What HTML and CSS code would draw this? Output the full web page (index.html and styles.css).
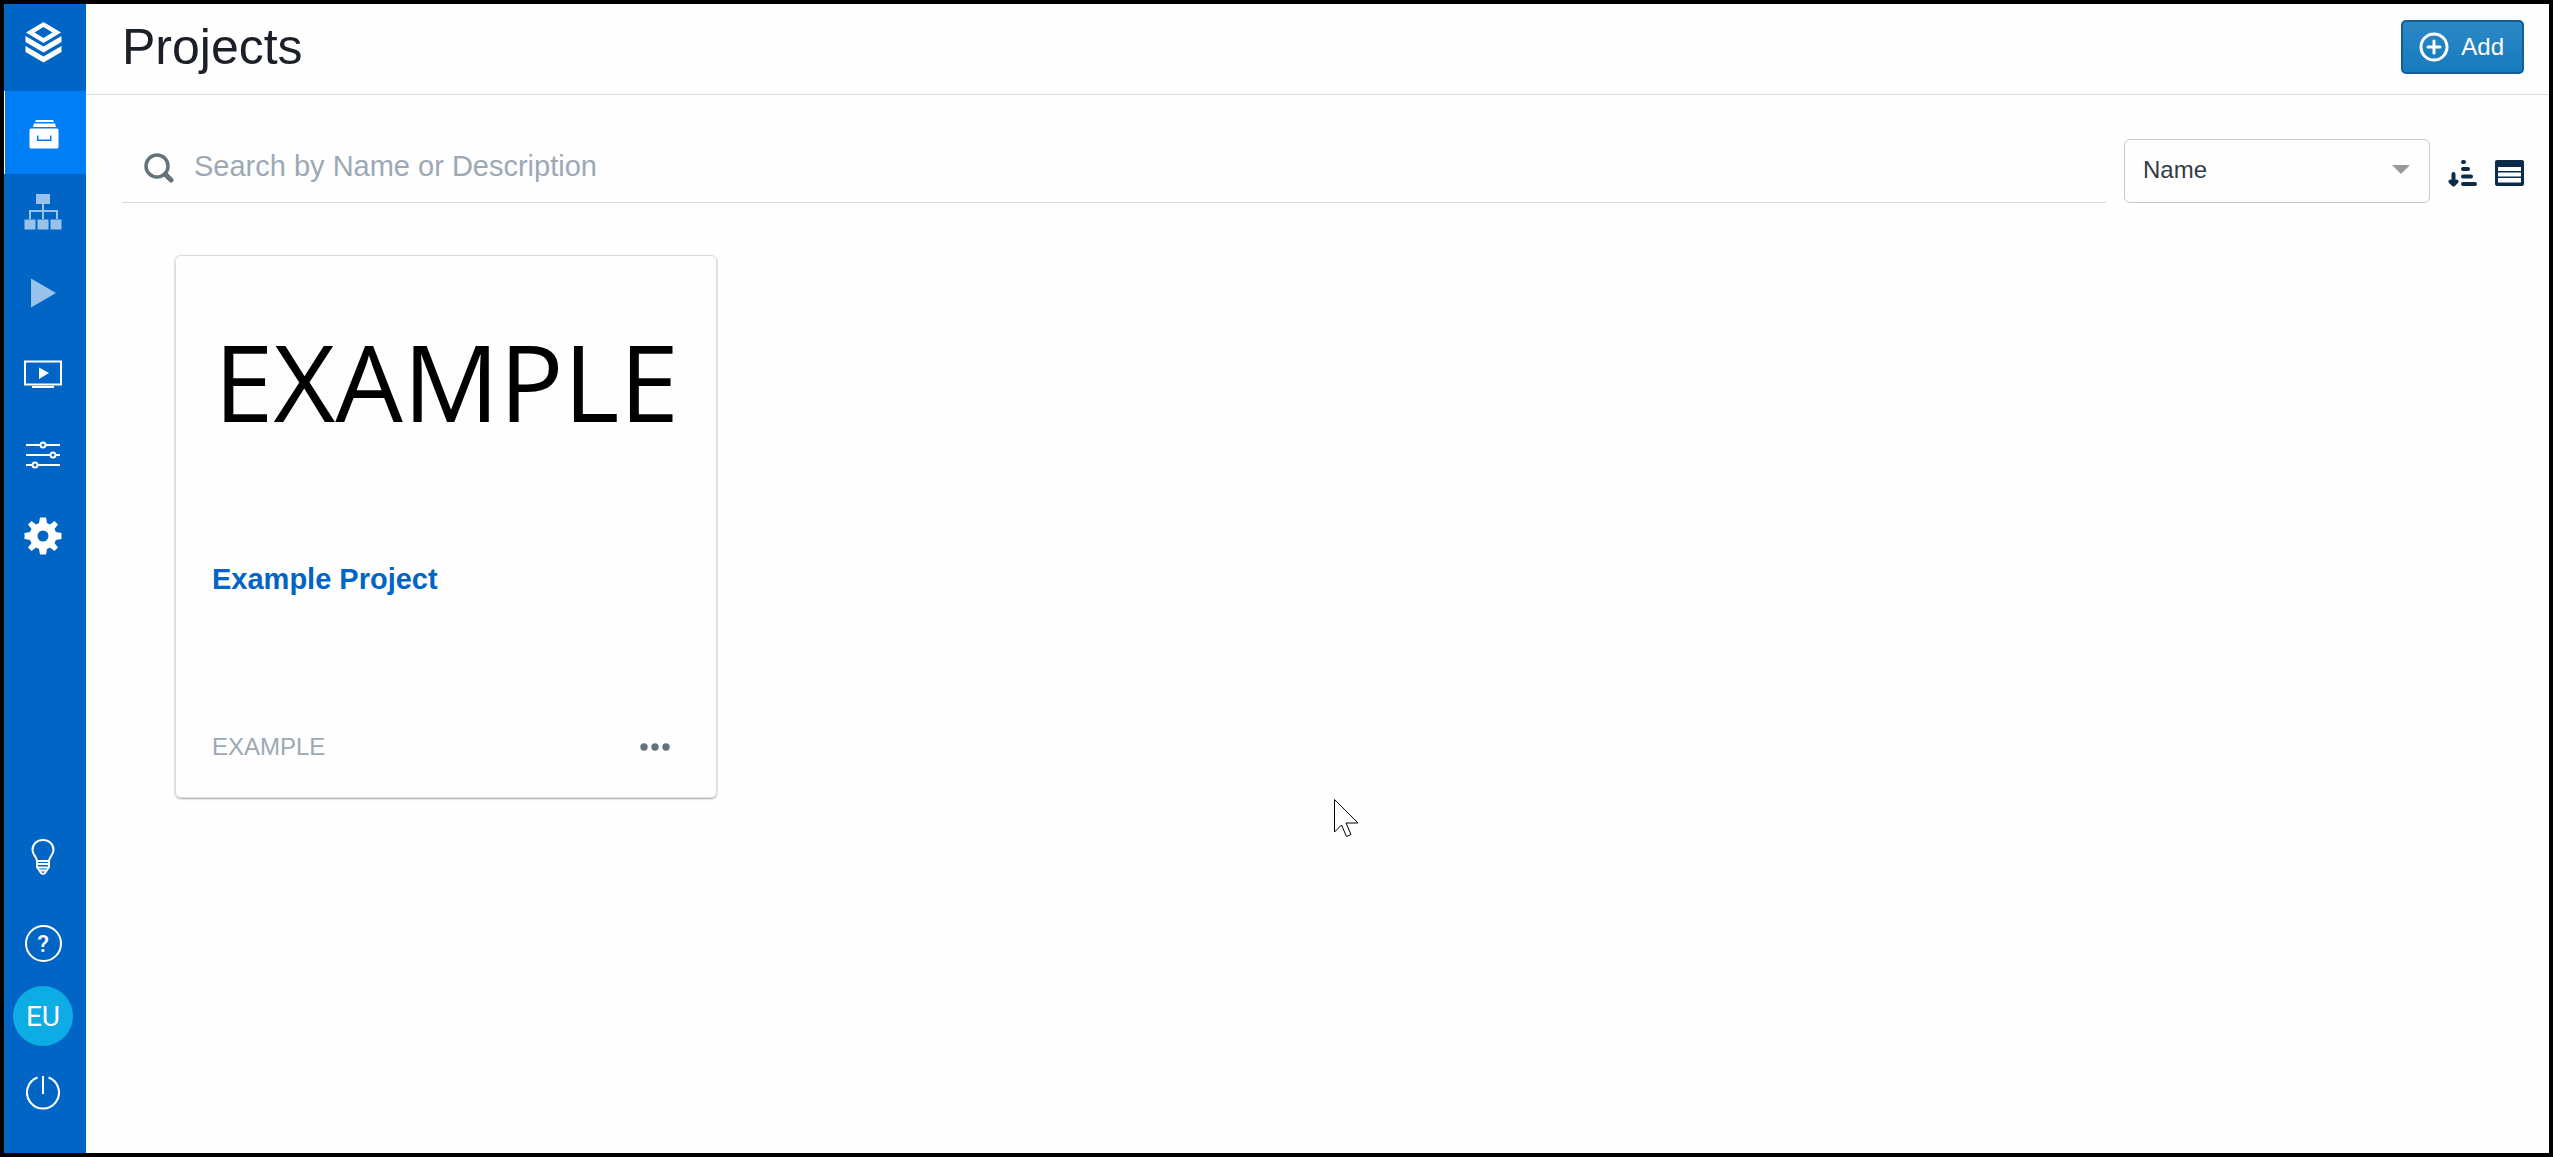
FILE: index.html
```html
<!DOCTYPE html>
<html lang="en">
<head>
    <meta charset="UTF-8">
    <meta name="viewport" content="width=device-width, initial-scale=1.0">
    <title>Projects</title>
    <link rel="stylesheet" href="styles.css">
</head>
<body>
    <div class="app">
        <aside class="sidebar">
            <a class="logo" href="#" aria-label="Home">
                <svg width="37" height="42" viewBox="0 0 37 42" fill="#fff">
                    <path fill-rule="evenodd" d="M18.500 1 36 11.500 18.500 22 1 11.500zM18.500 6 9.500 11.500 18.500 17 27.500 11.500z"/>
                    <path d="M0.500 15 18.500 25.500 36.500 15V21L18.500 31.500 0.500 21z"/>
                    <path d="M0.500 25 18.500 35.500 36.500 25V31L18.500 41.500 0.500 31z"/>
                </svg>
            </a>
            <nav class="menu">
                <a class="menu-item active" href="#" aria-label="Projects">
                    <svg width="30" height="30" viewBox="0 0 30 30" fill="#fff">
                        <path d="M7 1h17l1 2H6zM5 4.500h21l1 3.500H4z"/>
                        <path fill-rule="evenodd" d="M2 9.500h26a1.500 1.500 0 0 1 1.500 1.500v17a1.500 1.500 0 0 1-1.500 1.500H2A1.500 1.500 0 0 1 .5 28V11A1.500 1.500 0 0 1 2 9.500zM8 16.500V22h14.500v-5.500H21v4H9.500v-4z"/>
                    </svg>
                </a>
                <a class="menu-item" href="#" aria-label="Structure">
                    <svg width="38" height="36" viewBox="0 0 38 36" fill="#99c1e9">
                        <path d="M12 0h14v10H12zM18 10h2v6h14v9h-2v-7H20v7h-2v-7H7v7H5v-9h13zM0.500 25.500h11v10h-11zM13.500 25.500h11v10h-11zM26.500 25.500h11v10h-11z"/>
                    </svg>
                </a>
                <a class="menu-item" href="#" aria-label="Run">
                    <svg width="26" height="30" viewBox="0 0 26 30" fill="#99c1e9">
                        <path d="M1 0.500 26 15 1 29.500z"/>
                    </svg>
                </a>
                <a class="menu-item" href="#" aria-label="Sessions">
                    <svg width="38" height="28" viewBox="0 0 38 28" fill="#fff">
                        <path d="M1 1.500h36v23H1z" fill="none" stroke="#fff" stroke-width="2"/>
                        <path d="M15 7.500 25 13 15 19zM8 26h22v2H8z"/>
                    </svg>
                </a>
                <a class="menu-item" href="#" aria-label="Parameters">
                    <svg width="34" height="28" viewBox="0 0 34 28" fill="#0065c4" stroke="#fff" stroke-width="2">
                        <path d="M0 4h34M0 14h34M0 24h34"/>
                        <circle cx="17" cy="4" r="2.500"/>
                        <circle cx="27" cy="14" r="2.500"/>
                        <circle cx="9" cy="24" r="2.500"/>
                    </svg>
                </a>
                <a class="menu-item" href="#" aria-label="Settings">
                    <svg width="38" height="38" viewBox="-19 -19 38 38" fill="#fff">
                        <path fill-rule="evenodd" d="M-3-18.500H3L4-13 7-11.500 11.500-15 15-11.500 11.500-7 13-4 18.500-3V3L13 4 11.500 7 15 11.500 11.500 15 7 11.500 4 13 3 18.500H-3L-4 13-7 11.500-11.500 15-15 11.500-11.500 7-13 4-18.500 3V-3L-13-4-11.500-7-15-11.500-11.500-15-7-11.500-4-13zM0-5.500A5.500 5.500 0 1 0 0 5.500 5.500 5.500 0 1 0 0-5.500z"/>
                    </svg>
                </a>
            </nav>
            <div class="menu-bottom">
                <a class="help-item" href="#" aria-label="Tips">
                    <svg width="24" height="36" viewBox="0 0 24 36" fill="none" stroke="#fff" stroke-width="2" stroke-linejoin="round">
                        <path d="M6 22C6 18 1.500 16 1.500 11 1.500 5 6 1 12 1s10.500 4 10.500 10c0 5-4.500 7-4.500 11zM6 22v6l4 6c1 1 3 1 4 0l4-6v-6M6 25h12M6 28.500h12M8 31.500h8"/>
                    </svg>
                </a>
                <a class="help-item" href="#" aria-label="Help">
                    <span class="help-circle">?</span>
                </a>
                <button class="avatar" type="button">EU</button>
                <a class="power" href="#" aria-label="Log out">
                    <svg width="34" height="34" viewBox="0 0 34 34" fill="none" stroke="#fff" stroke-width="2">
                        <path d="M11.500 1.500a16 16 0 1 0 11 0M17 0v18"/>
                    </svg>
                </a>
            </div>
        </aside>

        <main class="main">
            <header class="header">
                <h1>Projects</h1>
                <button class="add-button" type="button">
                    <svg width="30" height="30" viewBox="0 0 30 30" fill="none" stroke="#fff" stroke-width="3">
                        <circle cx="15" cy="15" r="13"/>
                        <path d="M15 9v12M9 15h12" stroke-linecap="round"/>
                    </svg>
                    Add
                </button>
            </header>

            <section class="content">
                <div class="toolbar">
                    <label class="search">
                        <svg width="30" height="30" viewBox="0 0 30 30" fill="none" stroke="#64727c">
                            <circle cx="13" cy="13" r="11" stroke-width="3.500"/>
                            <path d="M21.500 21.500 27 27" stroke-width="5" stroke-linecap="round"/>
                        </svg>
                        <input type="text" placeholder="Search by Name or Description" aria-label="Search">
                    </label>
                    <div class="sort">
                        <select aria-label="Sort by">
                            <option>Name</option>
                        </select>
                        <span class="sort-arrow"></span>
                    </div>
                    <button class="icon-button" type="button" aria-label="Sort direction">
                        <svg width="29" height="30" viewBox="0 0 29 30" fill="none" stroke="#0a2c4a" stroke-width="4" stroke-linecap="round" stroke-linejoin="round">
                            <path d="M5.500 16v10M2.500 23.500l3 3 3-3M15 4h1M15 11h5M15 18.500h8M15 26h12"/>
                        </svg>
                    </button>
                    <button class="icon-button" type="button" aria-label="List view">
                        <svg width="29" height="30" viewBox="0 0 29 30" fill="#0a2c4a">
                            <path fill-rule="evenodd" d="M2 2h25a2 2 0 0 1 2 2v22a2 2 0 0 1-2 2H2a2 2 0 0 1-2-2V4a2 2 0 0 1 2-2zM3 9v4h23V9zM3 14.500v4h23v-4zM3 20v4.500h23V20z"/>
                        </svg>
                    </button>
                </div>

                <div class="cards">
                    <article class="card">
                        <div class="thumbnail">EXAMPLE</div>
                        <a class="card-title" href="#">Example Project</a>
                        <div class="card-footer">
                            <span>EXAMPLE</span>
                            <button class="more" type="button" aria-label="More">
                                <svg width="30" height="8" viewBox="0 0 30 8" fill="#64727c">
                                    <circle cx="4" cy="4" r="3.700"/>
                                    <circle cx="15" cy="4" r="3.700"/>
                                    <circle cx="26" cy="4" r="3.700"/>
                                </svg>
                            </button>
                        </div>
                    </article>
                </div>
            </section>
        </main>

        <svg class="cursor" width="28" height="40" viewBox="0 0 28 40" fill="#fff" stroke="#000" stroke-width="1">
            <path d="M1.500 1.500v32.500l7-7 5 11.500 4.500-2-5-11.500h12z"/>
        </svg>
    </div>
</body>
</html>
```

FILE: styles.css
```css
* {
    box-sizing: border-box;
}
body {
    margin: 0;
    font-family: "Liberation Sans", Arial, sans-serif;
    font-size: 24px;
    color: #1b1f27;
}
button, input, select {
    font-family: inherit;
    font-size: inherit;
}
svg {
    display: block;
}
.app {
    display: flex;
    min-height: 100vh;
    border: 4px solid #000;
    background-color: #fefefe;
}

/* Sidebar */
.sidebar {
    display: flex;
    flex-direction: column;
    width: 82px;
    background-color: #0065c4;
}
.logo, .menu-item, .help-item, .power {
    display: flex;
    justify-content: center;
    align-items: center;
    padding-right: 4px;
    text-decoration: none;
}
.logo {
    height: 87px;
    padding-bottom: 12px;
}
.menu-item {
    height: 81px;
}
.menu-item.active {
    height: 83px;
    margin-bottom: -3px;
    padding-top: 2px;
    background-color: #007ef5;
    border-left: 1px solid #fff;
}
.menu-bottom {
    margin-top: auto;
    padding-bottom: 14px;
}
.help-item {
    height: 86px;
}
.help-circle {
    width: 37px;
    height: 37px;
    border: 2px solid #fff;
    border-radius: 50%;
    color: #fff;
    font-family: Roboto, sans-serif;
    font-weight: 500;
    line-height: 34px;
    text-align: center;
}
.avatar {
    display: block;
    width: 60px;
    height: 60px;
    margin-left: 9px;
    padding: 0;
    border: none;
    border-radius: 50%;
    background-color: #0eace4;
    color: #fff;
    font-family: Roboto, sans-serif;
    font-size: 28px;
}
.power {
    height: 93px;
}

/* Header */
.main {
    flex: 1;
}
.header {
    display: flex;
    justify-content: space-between;
    align-items: center;
    height: 91px;
    padding: 0 25px 4px 36px;
    border-bottom: 1px solid #dcdcdc;
}
h1 {
    margin: 0;
    font-size: 50px;
    font-weight: normal;
}
.add-button {
    display: flex;
    align-items: center;
    gap: 12px;
    height: 54px;
    padding: 0 18px 0 16px;
    border: 2px solid #135f93;
    border-radius: 5px;
    background: linear-gradient(#2d88c4, #157bbf);
    color: #fff;
}

/* Search and sorting */
.content {
    padding: 44px 25px 0 36px;
}
.toolbar {
    display: flex;
    align-items: center;
    gap: 18px;
}
.search {
    flex: 1;
    display: flex;
    align-items: center;
    gap: 20px;
    height: 64px;
    padding: 0 0 6px 22px;
    border-bottom: 1px solid #dcdcdc;
}
.search input {
    flex: 1;
    padding: 0 0 2px;
    border: none;
    outline: none;
    background: none;
    font-size: 29px;
}
.search input::placeholder {
    color: #9ca9b5;
}
.sort {
    position: relative;
    width: 306px;
}
.sort select {
    display: block;
    width: 100%;
    height: 64px;
    padding: 0 18px 3px;
    border: 1px solid #c8c8c8;
    border-radius: 6px;
    background-color: #fefefe;
    color: #333c45;
    appearance: none;
}
.sort-arrow {
    position: absolute;
    top: 26px;
    right: 20px;
    border: 9px solid transparent;
    border-top-color: #999;
    border-bottom: none;
    pointer-events: none;
}
.icon-button {
    padding: 4px 0 0;
    border: none;
    background: none;
}

/* Project cards */
.cards {
    display: flex;
    flex-wrap: wrap;
    gap: 53px;
    padding: 52px 53px;
}
.card {
    display: flex;
    flex-direction: column;
    width: 542px;
    height: 543px;
    padding: 36px;
    border: 1px solid #dcdcdc;
    border-radius: 6px;
    box-shadow: 0 1px 2px rgba(0, 0, 0, 0.35);
}
.thumbnail {
    height: 271px;
    padding-left: 2px;
    color: #000;
    font-family: "Open Sans", "Noto Sans", sans-serif;
    font-size: 107px;
    line-height: 178px;
}
.card-title {
    color: #0065c4;
    font-size: 29px;
    font-weight: bold;
    text-decoration: none;
}
.card-footer {
    display: flex;
    justify-content: space-between;
    align-items: center;
    margin-top: auto;
    color: #9ca9b5;
}
.more {
    padding: 10px;
    border: none;
    background: none;
}

.cursor {
    position: absolute;
    top: 798px;
    left: 1333px;
}
```
